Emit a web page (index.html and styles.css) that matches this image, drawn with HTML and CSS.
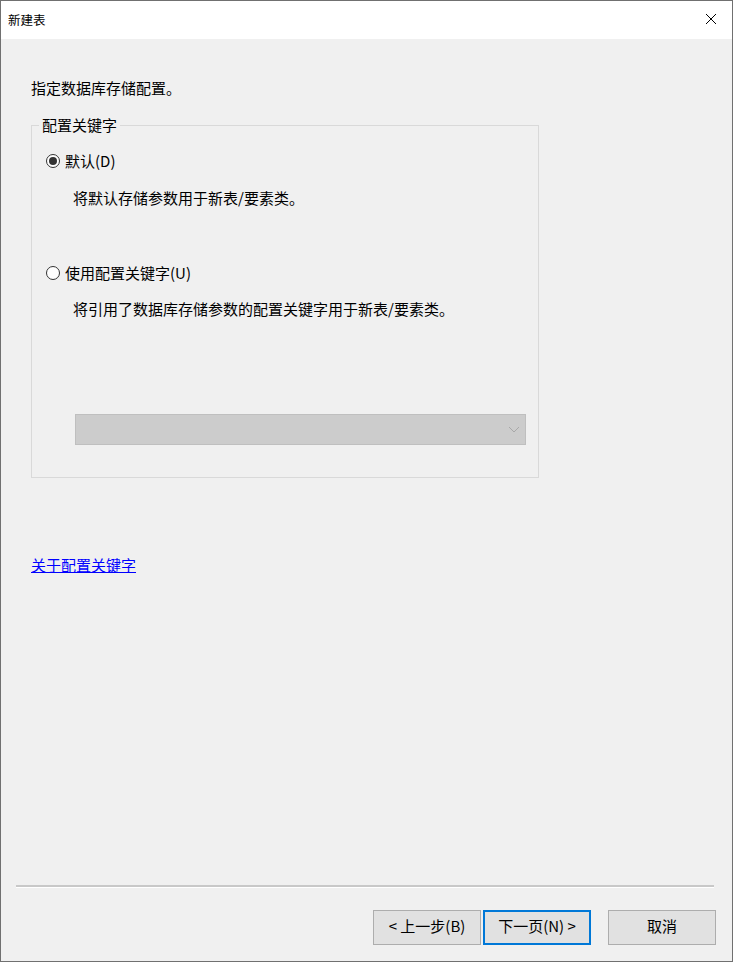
FILE: index.html
```html
<!DOCTYPE html>
<html lang="zh-CN">
<head>
    <meta charset="UTF-8">
    <meta name="viewport" content="width=device-width, initial-scale=1.0">
    <title>新建表</title>
    <link rel="stylesheet" href="styles.css">
</head>
<body>
    <div class="window">
        <div class="titlebar">
            <span class="title">新建表</span>
            <span class="close">
                <svg width="12" height="12" viewBox="0 0 12 12">
                    <path d="M1 1 L11 11 M11 1 L1 11" stroke="#000" stroke-width="1" fill="none"/>
                </svg>
            </span>
        </div>

        <div class="content">
            <p class="intro">指定数据库存储配置。</p>

            <fieldset class="group">
                <legend>配置关键字</legend>

                <label class="radio-row first">
                    <span class="radio checked"></span>
                    <span>默认(D)</span>
                </label>
                <p class="desc">将默认存储参数用于新表/要素类。</p>

                <label class="radio-row second">
                    <span class="radio"></span>
                    <span>使用配置关键字(U)</span>
                </label>
                <p class="desc">将引用了数据库存储参数的配置关键字用于新表/要素类。</p>

                <div class="combo">
                    <svg width="12" height="7" viewBox="0 0 12 7">
                        <path d="M1 1 L6 6 L11 1" stroke="#a8a8a8" stroke-width="1" fill="none"/>
                    </svg>
                </div>
            </fieldset>

            <a class="help-link" href="#">关于配置关键字</a>
        </div>

        <div class="footer">
            <div class="separator"></div>
            <div class="buttons">
                <button type="button" class="btn">&lt; 上一步(B)</button>
                <button type="button" class="btn default">下一页(N) &gt;</button>
                <button type="button" class="btn cancel">取消</button>
            </div>
        </div>
    </div>
</body>
</html>
```

FILE: styles.css
```css
html, body {
    margin: 0;
    padding: 0;
}
body {
    font-family: "Noto Sans CJK SC", "Noto Sans", sans-serif;
    color: #000;
    background: #f0f0f0;
}
.window {
    width: 733px;
    height: 962px;
    box-sizing: border-box;
    border: 1px solid #707070;
    display: flex;
    flex-direction: column;
    background: #f0f0f0;
}
.titlebar {
    height: 38px;
    background: #fff;
    display: flex;
    align-items: center;
    justify-content: space-between;
    padding: 0 15px 2px 7px;
    box-sizing: border-box;
    flex-shrink: 0;
}
.title {
    font-size: 12.5px;
}
.close {
    display: flex;
    align-items: center;
}
.content {
    flex: 1;
    padding: 39px 30px 0 30px;
    font-size: 15px;
    line-height: 20px;
}
.intro {
    margin: 0;
}
.group {
    margin: 17px 0 0 0;
    width: 508px;
    box-sizing: border-box;
    border: 1px solid #d9d9d9;
    padding: 0 0 32px 14px;
}
.group legend {
    padding: 0 3px;
    margin-left: -7px;
    line-height: 20px;
}
.radio-row {
    display: flex;
    align-items: center;
    gap: 5px;
}
.radio-row.first {
    margin-top: 16px;
}
.radio-row.second {
    margin-top: 55px;
}
.radio {
    width: 14px;
    height: 14px;
    box-sizing: border-box;
    border: 1px solid #333;
    border-radius: 50%;
    background: #fff;
    display: flex;
    align-items: center;
    justify-content: center;
}
.radio.checked::after {
    content: "";
    width: 8px;
    height: 8px;
    border-radius: 50%;
    background: #333;
}
.desc {
    margin: 17px 0 0 27px;
}
.radio-row.second + .desc {
    margin-top: 16px;
}
.combo {
    margin: 95px 0 0 29px;
    width: 451px;
    height: 31px;
    box-sizing: border-box;
    background: #cccccc;
    border: 1px solid #bfbfbf;
    display: flex;
    align-items: center;
    justify-content: flex-end;
    padding-right: 5px;
}
.help-link {
    display: inline-block;
    margin-top: 77px;
    color: #0000ff;
    text-decoration: underline;
}
.footer {
    flex-shrink: 0;
    padding: 0 16px 16px 15px;
}
.separator {
    height: 2px;
    background: #c8c8c8;
    border-bottom: 1px solid #fff;
    margin-right: 2px;
}
.buttons {
    margin-top: 22px;
    display: flex;
    justify-content: flex-end;
}
.btn {
    width: 108px;
    height: 35px;
    box-sizing: border-box;
    font-family: "Noto Sans CJK SC", "Noto Sans", sans-serif;
    font-size: 15px;
    line-height: 20px;
    background: #e1e1e1;
    border: 1px solid #adadad;
    color: #000;
    padding: 0 0 3px 0;
}
.btn.default {
    margin-left: 2px;
    border: 2px solid #0078d7;
}
.btn.cancel {
    margin-left: 17px;
}
```
